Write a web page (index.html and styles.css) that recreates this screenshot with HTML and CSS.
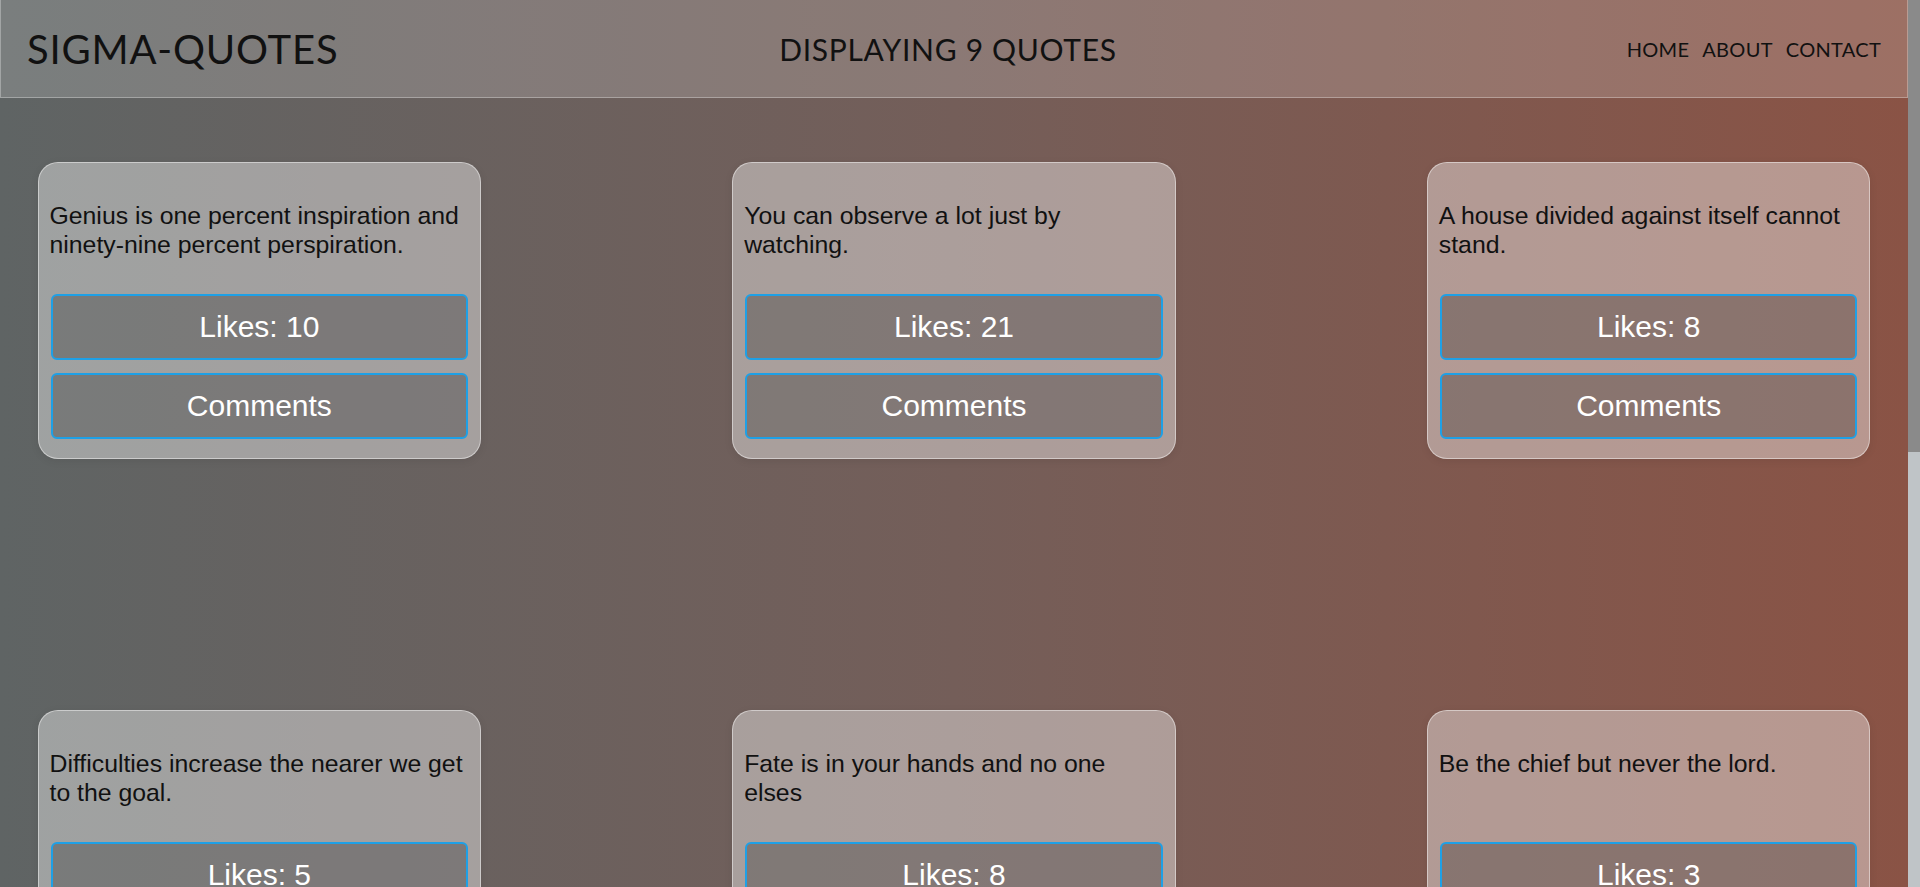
FILE: index.html
```html
<!DOCTYPE html>
<html lang="en">
<head>
<meta charset="utf-8">
<title>Sigma-Quotes</title>
<link rel="stylesheet" href="styles.css">
</head>
<body>
<header class="topbar">
  <div class="logo">SIGMA-QUOTES</div>
  <div class="title">DISPLAYING 9 QUOTES</div>
  <nav class="nav">
    <a href="#">HOME</a>
    <a href="#">ABOUT</a>
    <a href="#">CONTACT</a>
  </nav>
</header>
<main class="grid">
  <div class="card">
    <p class="quote">Genius is one percent inspiration and ninety-nine percent perspiration.</p>
    <button class="btn">Likes: 10</button>
    <button class="btn">Comments</button>
  </div>
  <div class="card">
    <p class="quote">You can observe a lot just by watching.</p>
    <button class="btn">Likes: 21</button>
    <button class="btn">Comments</button>
  </div>
  <div class="card">
    <p class="quote">A house divided against itself cannot stand.</p>
    <button class="btn">Likes: 8</button>
    <button class="btn">Comments</button>
  </div>
  <div class="card">
    <p class="quote">Difficulties increase the nearer we get to the goal.</p>
    <button class="btn">Likes: 5</button>
    <button class="btn">Comments</button>
  </div>
  <div class="card">
    <p class="quote">Fate is in your hands and no one elses</p>
    <button class="btn">Likes: 8</button>
    <button class="btn">Comments</button>
  </div>
  <div class="card">
    <p class="quote">Be the chief but never the lord.</p>
    <button class="btn">Likes: 3</button>
    <button class="btn">Comments</button>
  </div>
  <div class="card">
    <p class="quote">Nothing happens unless first we dream.</p>
    <button class="btn">Likes: 12</button>
    <button class="btn">Comments</button>
  </div>
  <div class="card">
    <p class="quote">Well begun is half done.</p>
    <button class="btn">Likes: 7</button>
    <button class="btn">Comments</button>
  </div>
  <div class="card">
    <p class="quote">Life is a learning experience, only if you learn.</p>
    <button class="btn">Likes: 4</button>
    <button class="btn">Comments</button>
  </div>
</main>
<div class="scrollbar" aria-hidden="true"><div class="scrollbar-thumb"></div></div>
</body>
</html>
```

FILE: styles.css
```css
html {
  background: #bfc4c7;
}

body {
  margin: 0 12px 0 0;
  min-height: 100vh;
  background: linear-gradient(to right, #5f6464 0%, #745e59 50%, #8a5345 100%);
  font-family: "Liberation Sans", Arial, sans-serif;
  color: #111;
}

.scrollbar {
  position: fixed;
  top: 0;
  right: 0;
  width: 12px;
  height: 100vh;
  background: #bfc4c7;
}

.scrollbar-thumb {
  height: 452px;
  background: #8a8a8a;
}

.topbar {
  box-sizing: border-box;
  height: 98px;
  display: grid;
  grid-template-columns: 1fr auto 1fr;
  align-items: center;
  padding: 0 26px;
  background: rgba(255, 255, 255, 0.17);
  border: 1px solid rgba(255, 255, 255, 0.3);
  border-top: none;
  font-family: Lato, "Open Sans", sans-serif;
  color: #111;
}

.logo {
  font-size: 40px;
  letter-spacing: 0.8px;
  justify-self: start;
}

.title {
  font-size: 30px;
  letter-spacing: 0.7px;
  padding-right: 12px;
}

.nav {
  justify-self: end;
  display: flex;
  gap: 13px;
}

.nav a {
  color: #111;
  text-decoration: none;
  font-size: 20px;
  letter-spacing: 0.3px;
}

.grid {
  display: grid;
  grid-template-columns: repeat(3, 1fr);
  gap: 251px;
  padding: 64px 37.5px 186px;
}

.card {
  display: flex;
  flex-direction: column;
  padding: 12px 12px 19px;
  background: rgba(255, 255, 255, 0.4);
  border: 1px solid rgba(255, 255, 255, 0.45);
  border-radius: 20px;
  box-shadow: 0 2px 8px rgba(0, 0, 0, 0.08);
}

.quote {
  flex: 1;
  margin: 26px -1px 35px;
  font-size: 24.8px;
  line-height: 29px;
}

.btn {
  display: block;
  width: 100%;
  height: 66px;
  margin: 0 0 13px;
  background: rgba(0, 0, 0, 0.24);
  border: 2px solid #1ea0e6;
  border-radius: 6px;
  color: #fff;
  font-family: "Liberation Sans", Arial, sans-serif;
  font-size: 30px;
}

.btn:last-child {
  margin-bottom: 0;
}
```
